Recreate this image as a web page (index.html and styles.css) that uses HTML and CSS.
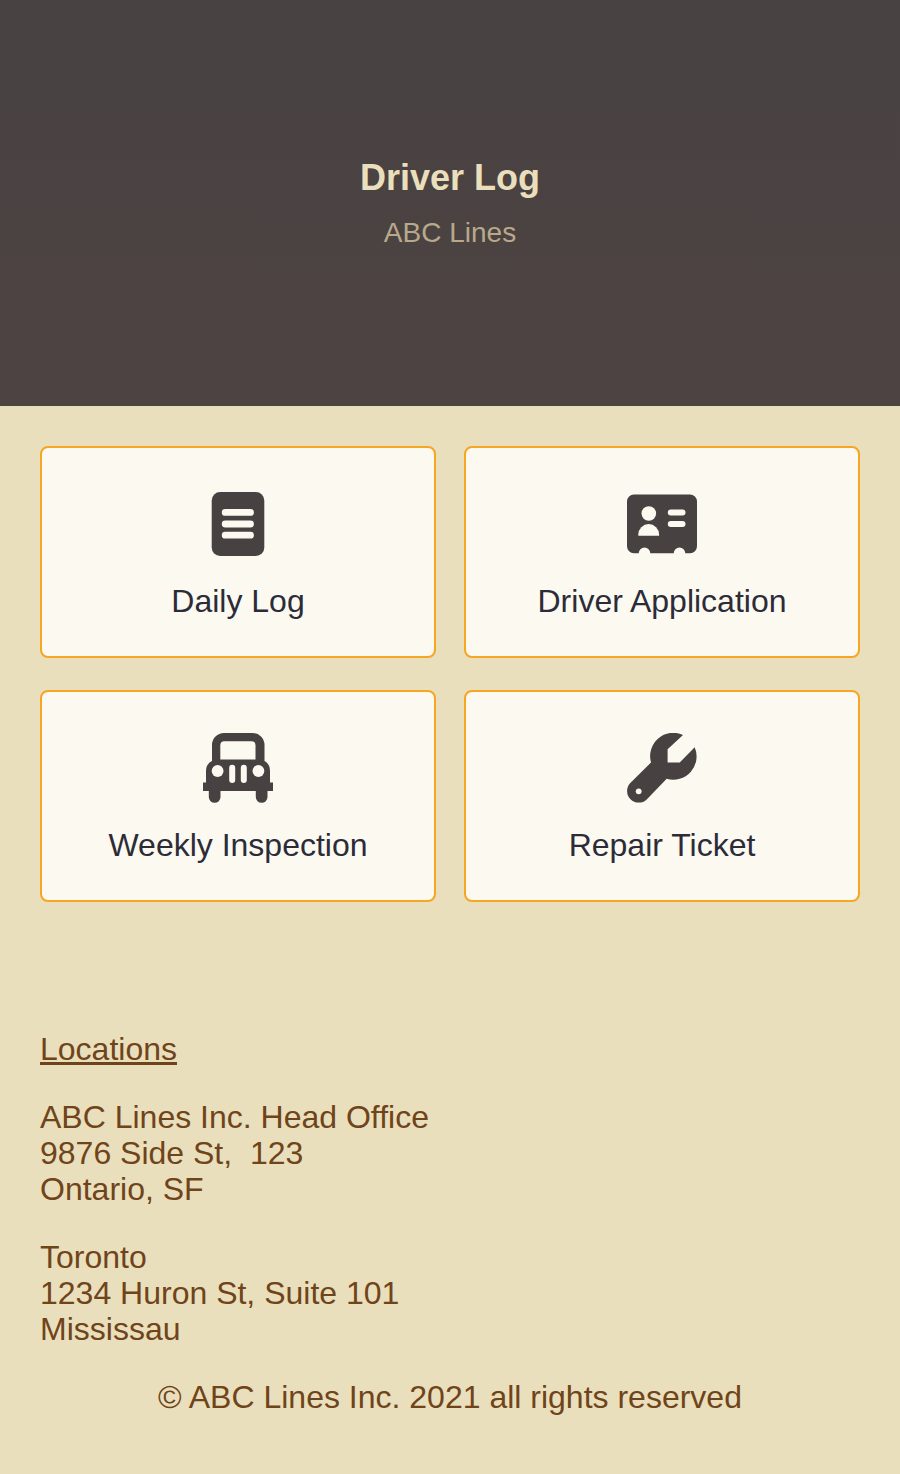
FILE: index.html
```html
<!DOCTYPE html>
<html lang="en">
<head>
    <meta charset="UTF-8">
    <meta name="viewport" content="width=device-width, initial-scale=1.0">
    <title>Driver Log</title>
    <link rel="stylesheet" href="styles.css">
</head>
<body>
    <header class="hero">
        <h1>Driver Log</h1>
        <p>ABC Lines</p>
    </header>

    <main class="menu">
        <a class="card" href="#">
            <svg width="70" height="70" viewBox="0 0 70 70">
                <rect x="8.700" y="3" width="52.600" height="64" rx="8.500" fill="#484141"/>
                <path d="M22.200 23.400H47.500M22.200 35H47.500M22.200 46.200H47.500" stroke="#fcf9f1" stroke-width="6.800" stroke-linecap="round"/>
            </svg>
            <span>Daily Log</span>
        </a>
        <a class="card" href="#">
            <svg width="70" height="70" viewBox="0 0 70 70">
                <path d="M7 5.500H63a7 7 0 0 1 7 7V57.300a7 7 0 0 1-7 7H58.300a5.800 5.800 0 0 0-11.600 0H23.300a5.800 5.800 0 0 0-11.600 0H7a7 7 0 0 1-7-7V12.500a7 7 0 0 1 7-7z" fill="#484141"/>
                <circle cx="21.800" cy="24.500" r="7.300" fill="#fcf9f1"/>
                <path d="M11.300 46.800V45.500a10.400 10.400 0 0 1 20.800 0v1.300z" fill="#fcf9f1"/>
                <path d="M43.800 23.400H55.500M43.800 35H55.500" stroke="#fcf9f1" stroke-width="6" stroke-linecap="round"/>
            </svg>
            <span>Driver Application</span>
        </a>
        <a class="card" href="#">
            <svg width="70" height="70" viewBox="0 0 70 70">
                <path d="M9 28V12A12 12 0 0 1 21 0H49.500A12 12 0 0 1 61.500 12V28Q67 31 67 38V49.500H70V58H64.500V64a5.800 5.800 0 0 1-11.700 0V58H17.500V64a5.800 5.800 0 0 1-11.700 0V58H0V49.500H3V38Q3 31 9 28z" fill="#484141"/>
                <path d="M17.300 26.500V12.300a4 4 0 0 1 4-4H48.500a4 4 0 0 1 4 4V26.500z" fill="#fcf9f1"/>
                <circle cx="14.600" cy="38" r="5.900" fill="#fcf9f1"/>
                <circle cx="55.400" cy="38" r="5.900" fill="#fcf9f1"/>
                <path d="M29.200 34.800V47M40.800 34.800V47" stroke="#fcf9f1" stroke-width="6" stroke-linecap="round"/>
            </svg>
            <span>Weekly Inspection</span>
        </a>
        <a class="card" href="#">
            <svg width="70" height="70" viewBox="0 0 70 70">
                <path d="M56 1.900L40.600 16.300V29.600H52.700L67.700 14.300A23.300 23.300 0 0 1 39.700 45.800L19.700 66.400A11.600 11.600 0 0 1 3.300 50L24 29.500A23.300 23.300 0 0 1 56 1.900z" fill="#484141"/>
                <circle cx="11.700" cy="58.300" r="2.900" fill="#fcf9f1"/>
            </svg>
            <span>Repair Ticket</span>
        </a>
    </main>

    <footer>
        <p><u>Locations</u></p>
        <p>ABC Lines Inc. Head Office<br>9876 Side St,&nbsp; 123<br>Ontario, SF</p>
        <p>Toronto<br>1234 Huron St, Suite 101<br>Mississau</p>
        <p class="copyright">© ABC Lines Inc. 2021 all rights reserved</p>
    </footer>
</body>
</html>
```
FILE: styles.css
```css
body {
    margin: 0;
    font-family: "Liberation Sans", Arial, sans-serif;
    font-size: 32px;
    line-height: 36px;
    background-color: #e9dfbc;
    color: #70441a;
}
.hero {
    box-sizing: border-box;
    height: 406px;
    padding-top: 158px;
    text-align: center;
    background: linear-gradient(#484242, #4d4342);
}
h1 {
    margin: 0;
    font-size: 36px;
    line-height: 40px;
    color: #eadfbc;
}
.hero p {
    margin: 19px 0 0;
    font-size: 28px;
    line-height: 32px;
    color: #b9a98b;
}
.menu {
    display: grid;
    grid-template-columns: 1fr 1fr;
    gap: 32px 28px;
    padding: 40px 40px 0;
}
.card {
    box-sizing: border-box;
    height: 212px;
    padding-top: 41px;
    display: flex;
    flex-direction: column;
    align-items: center;
    gap: 24px;
    background-color: #fcf9f1;
    border: 2px solid #f5a623;
    border-radius: 8px;
    color: #2c2c38;
    text-decoration: none;
}
footer {
    padding: 129px 40px 59px;
}
footer p {
    margin: 0 0 32px;
}
footer .copyright {
    margin: 0;
    text-align: center;
}
```
